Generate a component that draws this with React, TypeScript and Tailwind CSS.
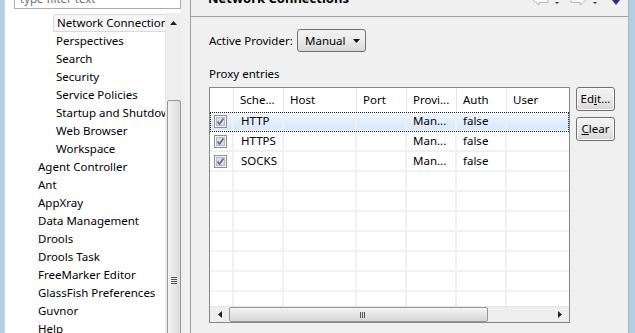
import { ReactNode } from 'react';

const font = "font-['Segoe_UI','Noto_Sans',sans-serif]";

const treeItems: { label: string; indent: 1 | 2; selected?: boolean }[] = [
    { label: 'Network Connections', indent: 2, selected: true },
    { label: 'Perspectives', indent: 2 },
    { label: 'Search', indent: 2 },
    { label: 'Security', indent: 2 },
    { label: 'Service Policies', indent: 2 },
    { label: 'Startup and Shutdown', indent: 2 },
    { label: 'Web Browser', indent: 2 },
    { label: 'Workspace', indent: 2 },
    { label: 'Agent Controller', indent: 1 },
    { label: 'Ant', indent: 1 },
    { label: 'AppXray', indent: 1 },
    { label: 'Data Management', indent: 1 },
    { label: 'Drools', indent: 1 },
    { label: 'Drools Task', indent: 1 },
    { label: 'FreeMarker Editor', indent: 1 },
    { label: 'GlassFish Preferences', indent: 1 },
    { label: 'Guvnor', indent: 1 },
    { label: 'Help', indent: 1 },
];

const entries = [
    { scheme: 'HTTP', provider: 'Man...', auth: 'false', selected: true },
    { scheme: 'HTTPS', provider: 'Man...', auth: 'false' },
    { scheme: 'SOCKS', provider: 'Man...', auth: 'false' },
];

// column widths inside the table (px), last one fills
const cols = ['w-[24px]', 'w-[50px]', 'w-[73px]', 'w-[50px]', 'w-[50px]', 'w-[50px]', 'flex-1'];

function Checkbox() {
    return (
        <svg width="13" height="13" viewBox="0 0 13 13">
            <rect x="0.5" y="0.5" width="12" height="12" fill="#f4f4f4" stroke="#8e8f8f" />
            <rect x="2.5" y="2.5" width="8" height="8" fill="#dcdee2" stroke="#b9bcc2" />
            <path d="M3.5 6.5 L5.5 9 L9.5 3.5" fill="none" stroke="#4e6ba0" strokeWidth="1.6" />
        </svg>
    );
}

function Button({ children }: { children: ReactNode }) {
    return (
        <div className="h-[24px] w-[39px] rounded-[3px] border border-[#707070] bg-gradient-to-b from-[#f2f2f2] via-[#ebebeb] to-[#d6d6d6] flex items-center justify-center text-[11.5px] text-black shadow-[inset_0_0_0_1px_#fcfcfc]">
            {children}
        </div>
    );
}

function Row({ children, selected }: { children: ReactNode[]; selected?: boolean }) {
    return (
        <div
            className={
                'flex h-[20px] border-b-2 border-[#eff1f4] ' +
                (selected
                    ? 'bg-gradient-to-b from-[#f1f6fd] to-[#d9e8fb] outline-1 outline-dotted outline-[#222] -outline-offset-1'
                    : '')
            }
        >
            {children.map((c, i) => (
                <div key={i} className={cols[i] + ' h-full flex items-center pl-[6px] ' + (i < 6 ? 'border-r-2 border-[#eff1f4]' : '')}>
                    {c}
                </div>
            ))}
        </div>
    );
}

export default function App() {
    return (
        <div className={'flex w-[635px] h-[333px] overflow-hidden bg-[#f0f0f0] text-black text-[11.5px] ' + font}>
            {/* window frame left */}
            <div className="w-[5px] bg-[#b6cde6] border-r border-[#c9d6e3]" />

            {/* left pane: filter + tree */}
            <div className="w-[176px] flex flex-col bg-white">
                <div className="h-[13px] pl-[9px]">
                    <div className="-mt-[12px] h-[21px] w-[167px] border border-[#abadb3] flex items-center pl-[5px] text-[#6d6d6d]">
                        type filter text
                    </div>
                </div>
                <div className="flex flex-1 min-h-0">
                    <div className="flex-1 overflow-hidden pt-[1px]">
                        {treeItems.map((it) => (
                            <div key={it.label} className={'h-[18px] flex items-center whitespace-nowrap ' + (it.indent === 2 ? 'pl-[48px]' : 'pl-[30px]')}>
                                <span
                                    className={
                                        'px-[3px] h-[18px] flex items-center ' +
                                        (it.selected ? 'border border-[#d9d9d9] rounded-[2px] bg-[#f7f7f7] w-[115px]' : '')
                                    }
                                >
                                    {it.label}
                                </span>
                            </div>
                        ))}
                    </div>
                    {/* vertical scrollbar */}
                    <div className="w-[16px] bg-[#eeeeee] border-l border-[#e6e6e6] flex flex-col items-center">
                        <div className="h-[19px] flex items-center justify-center">
                            <svg width="7" height="4" viewBox="0 0 7 4">
                                <path d="M0 4 L3.5 0 L7 4 Z" fill="#222" />
                            </svg>
                        </div>
                        <div className="h-[68px]" />
                        <div className="w-[14px] flex-1 -mb-[20px] rounded-[2px] border border-[#979797] bg-gradient-to-r from-[#f4f4f4] to-[#dcdcdc] flex flex-col items-center">
                            <div className="mt-[176px] flex flex-col gap-[1px]">
                                <div className="w-[6px] h-[1px] bg-[#555]" />
                                <div className="w-[6px] h-[1px] bg-[#555]" />
                                <div className="w-[6px] h-[1px] bg-[#555]" />
                                <div className="w-[6px] h-[1px] bg-[#555]" />
                            </div>
                        </div>
                    </div>
                </div>
            </div>

            {/* sash */}
            <div className="w-[9px]" />
            <div className="w-[1px] bg-[#a0a0a0]" />

            {/* right pane */}
            <div className="flex-1 flex flex-col">
                <div className="h-[17px] border-b border-[#a0a0a0] flex items-end justify-between pl-[17px] pr-[8px] overflow-hidden">
                    <div className="text-[13px] font-bold leading-[13px] mb-[11px] whitespace-nowrap">Network Connections</div>
                    <div className="flex items-start gap-[6px] self-start -mt-[6px]">
                        <svg width="17" height="12" viewBox="0 0 17 12">
                            <path d="M1 6 L7 1 L7 3.5 L16 3.5 L16 8.5 L7 8.5 L7 11 Z" fill="#f7f7f7" stroke="#b9b9b9" />
                        </svg>
                        <svg width="5" height="12" viewBox="0 0 5 12">
                            <path d="M0 8 L4 8 L2 10 Z" fill="#333" />
                        </svg>
                        <svg width="17" height="12" viewBox="0 0 17 12" className="ml-[4px]">
                            <path d="M16 6 L10 1 L10 3.5 L1 3.5 L1 8.5 L10 8.5 L10 11 Z" fill="#f7f7f7" stroke="#b9b9b9" />
                        </svg>
                        <svg width="5" height="12" viewBox="0 0 5 12">
                            <path d="M0 8 L4 8 L2 10 Z" fill="#333" />
                        </svg>
                        <svg width="8" height="12" viewBox="0 0 8 12" className="ml-[8px]">
                            <path d="M0 6 L8 6 L4 11 Z" fill="#3a2a7a" />
                        </svg>
                    </div>
                </div>

                <div className="flex-1 pl-[18px] pr-[12px] pt-[12px]">
                    <div className="flex items-center h-[23px]">
                        <span className="w-[88px]">Active Provider:</span>
                        <div className="h-[23px] w-[69px] rounded-[3px] border border-[#707070] bg-gradient-to-b from-[#f2f2f2] via-[#ebebeb] to-[#d8d8d8] flex items-center justify-between pl-[7px] pr-[5px]">
                            <span>Manual</span>
                            <svg width="7" height="4" viewBox="0 0 7 4">
                                <path d="M0 0 L7 0 L3.5 4 Z" fill="#111" />
                            </svg>
                        </div>
                    </div>

                    <div className="mt-[13px] h-[17px] flex items-center">Proxy entries</div>

                    <div className="mt-[5px] flex gap-[6px]">
                        {/* table */}
                        <div className="w-[361px] h-[236px] border border-[#828790] bg-white flex flex-col">
                            <div className="flex h-[24px]">
                                {['', 'Sche...', 'Host', 'Port', 'Provi...', 'Auth', 'User'].map((h, i) => (
                                    <div key={i} className={cols[i] + ' h-full flex items-center pl-[6px] ' + (i < 6 ? 'border-r border-[#e5e5e5]' : '')}>
                                        {h}
                                    </div>
                                ))}
                            </div>
                            <div className="flex-1 overflow-hidden">
                                {entries.map((e) => (
                                    <Row key={e.scheme} selected={e.selected}>
                                        {[
                                            <span className="-ml-[2px] flex"><Checkbox /></span>,
                                            <span className="pl-[1px]">{e.scheme}</span>,
                                            '',
                                            '',
                                            e.provider,
                                            e.auth,
                                            '',
                                        ]}
                                    </Row>
                                ))}
                                {[0, 1, 2, 3, 4, 5, 6, 7].map((i) => (
                                    <Row key={i}>{['', '', '', '', '', '', '']}</Row>
                                ))}
                            </div>
                            {/* horizontal scrollbar */}
                            <div className="h-[16px] flex items-center bg-[#eeeeee] border-t border-[#e6e6e6]">
                                <div className="w-[19px] flex justify-center">
                                    <svg width="4" height="7" viewBox="0 0 4 7">
                                        <path d="M4 0 L0 3.5 L4 7 Z" fill="#222" />
                                    </svg>
                                </div>
                                <div className="w-[259px] h-[15px] rounded-[2px] border border-[#979797] bg-gradient-to-b from-[#f4f4f4] to-[#d6d6d6] flex items-center justify-center gap-[1px] pl-[8px]">
                                    <div className="w-[1px] h-[6px] bg-[#555]" />
                                    <div className="w-[1px] h-[6px] bg-[#555]" />
                                    <div className="w-[1px] h-[6px] bg-[#555]" />
                                </div>
                                <div className="flex-1" />
                                <div className="w-[19px] flex justify-center">
                                    <svg width="4" height="7" viewBox="0 0 4 7">
                                        <path d="M0 0 L4 3.5 L0 7 Z" fill="#222" />
                                    </svg>
                                </div>
                            </div>
                        </div>

                        <div className="flex flex-col gap-[6px]">
                            <Button>
                                Ed<span className="underline">i</span>t...
                            </Button>
                            <Button>
                                <span className="underline">C</span>lear
                            </Button>
                        </div>
                    </div>
                </div>
            </div>

            {/* window frame right */}
            <div className="w-[7px] bg-[#b6cde6] border-l border-[#9fb6cf]" />
        </div>
    );
}
